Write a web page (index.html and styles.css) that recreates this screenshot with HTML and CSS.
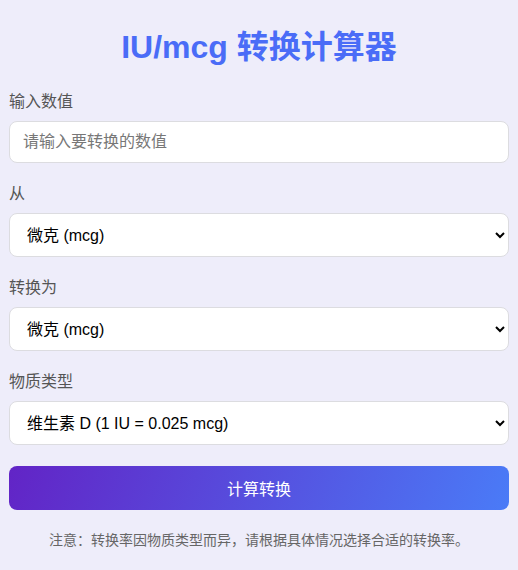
FILE: index.html
```html
<!DOCTYPE html>
<html lang="zh-CN">
  <head>
    <meta charset="UTF-8" />
    <meta name="viewport" content="width=device-width, initial-scale=1.0" />
    <title>IU/mcg 转换计算器</title>
    <link rel="stylesheet" href="styles.css">
  </head>
  <body>
    <div class="container">
      <h1>IU/mcg 转换计算器</h1>
      <div class="form-group">
        <label for="value">输入数值</label>
        <input type="number" id="value" placeholder="请输入要转换的数值" />
      </div>
      <div class="form-group">
        <label for="fromUnit">从</label>
        <select id="fromUnit">
          <option value="mcg">微克 (mcg)</option>
          <option value="iu">国际单位 (IU)</option>
        </select>
      </div>
      <div class="form-group">
        <label for="toUnit">转换为</label>
        <select id="toUnit">
          <option value="mcg">微克 (mcg)</option>
          <option value="iu">国际单位 (IU)</option>
        </select>
      </div>
      <div class="form-group">
        <label for="substance">物质类型</label>
        <select id="substance">
          <option value="0.025">维生素 D (1 IU = 0.025 mcg)</option>
          <option value="0.3">维生素 A (1 IU = 0.3 mcg)</option>
          <option value="0.67">维生素 E (1 IU = 0.67 mg)</option>
        </select>
      </div>
      <button type="button" class="convert-btn">计算转换</button>
      <p class="note">注意：转换率因物质类型而异，请根据具体情况选择合适的转换率。</p>
    </div>
  </body>
</html>
```

FILE: styles.css
```css
body {
  margin: 0;
  font-family: "Liberation Sans", "Noto Sans CJK SC", sans-serif;
  background: #eeedfa;
  color: #333;
}
.container {
  max-width: 500px;
  margin: 0 auto;
  padding-top: 24px;
}
h1 {
  margin: 0 0 20px;
  text-align: center;
  font-size: 32px;
  line-height: 46px;
  color: #4a6cf7;
}
.form-group {
  margin-bottom: 19px;
}
.form-group label {
  display: block;
  margin-bottom: 8px;
  font-size: 16px;
  line-height: 23px;
  color: #555;
}
input,
select {
  display: block;
  width: 100%;
  box-sizing: border-box;
  padding: 10px 13px;
  font-family: inherit;
  font-size: 16px;
  line-height: 20px;
  border: 1px solid #dcdce0;
  border-radius: 8px;
  background: #fff;
  color: #000;
}
select {
  height: 44px;
  padding: 0 10px 0 13px;
}
input::placeholder {
  color: #777;
}
.convert-btn {
  display: block;
  width: 100%;
  height: 44px;
  margin-top: 21px;
  border: none;
  border-radius: 8px;
  background: linear-gradient(110deg, #6224c6, #4a7bf7);
  color: #fff;
  font-family: inherit;
  font-size: 16px;
  cursor: pointer;
}
.form-group + .convert-btn {
  margin-top: 21px;
}
.form-group:last-of-type {
  margin-bottom: 0;
}
.note {
  margin: 20px 0 0;
  text-align: center;
  font-size: 14px;
  line-height: 20px;
  color: #666;
}
```
